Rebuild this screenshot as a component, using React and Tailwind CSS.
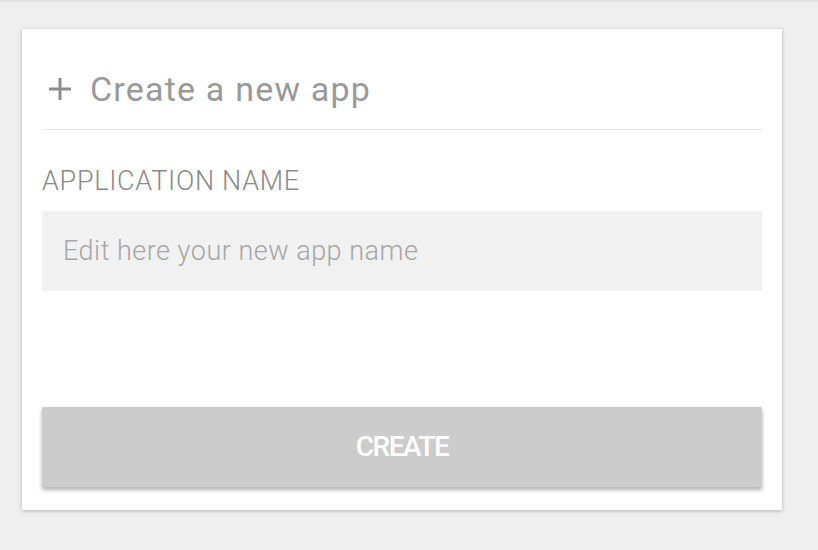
import React from 'react';

const PlusIcon = () => (
  <svg width="24" height="24" viewBox="0 0 24 24" className="shrink-0">
    <path d="M12 1v22M1 12h22" stroke="#8c8c8c" strokeWidth="3" fill="none" />
  </svg>
);

const App = () => {
  return (
    <div
      className="w-[818px] h-[550px] bg-[#efefef] border-t-2 border-[#e3e3e3] pt-[27px] pl-[22px]"
      style={{ fontFamily: 'Roboto, "Liberation Sans", sans-serif' }}
    >
      <div className="w-[760px] h-[481px] bg-white shadow-[0_1px_4px_rgba(0,0,0,0.25)] px-[20px] flex flex-col">
        {/* header */}
        <div className="h-[101px] flex items-center gap-[18px] pl-[6px] border-b border-[#e8e8e8] pt-[20px]">
          <PlusIcon />
          <h2 className="text-[34px] text-[#999999] leading-none tracking-[1.2px]">Create a new app</h2>
        </div>

        <label className="mt-[36px] text-[27px] font-light text-[#8a8a8a] leading-[30px] tracking-[0.7px]">
          APPLICATION NAME
        </label>

        <input
          type="text"
          placeholder="Edit here your new app name"
          className="mt-[15px] h-[80px] bg-[#f1f1f1] px-[21px] text-[27px] font-light text-[#777] tracking-[0.5px] placeholder:text-[#a6a6a6] outline-none"
        />

        <button className="mt-[116px] h-[80px] bg-[#cccccc] text-white text-[28px] font-medium tracking-[-1.5px] shadow-[0_3px_4px_rgba(0,0,0,0.3)]">
          CREATE
        </button>
      </div>
    </div>
  );
};

export default App;
